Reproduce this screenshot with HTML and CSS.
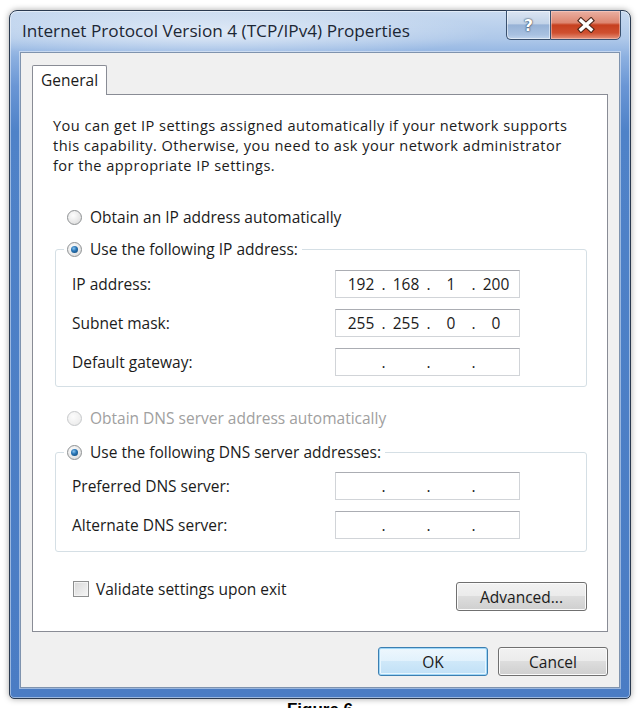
FILE: index.html
```html
<!DOCTYPE html>
<html lang="en">

<head>
    <meta charset="UTF-8">
    <meta name="viewport" content="width=device-width, initial-scale=1.0">
    <title>Internet Protocol Version 4 (TCP/IPv4) Properties</title>
    <link rel="stylesheet" href="styles.css">
</head>

<body>
    <div class="window">
        <div class="titlebar">
            <span class="title">Internet Protocol Version 4 (TCP/IPv4) Properties</span>
            <div class="caption-buttons">
                <button class="cap help" type="button">?</button>
                <button class="cap close" type="button">
                    <svg width="20" height="16" viewBox="0 0 20 16">
                        <path d="M5 3.5 L15 12.5 M15 3.5 L5 12.5" stroke="#4a2418" stroke-width="5.6" stroke-linecap="square" fill="none"/>
                        <path d="M5 3.5 L15 12.5 M15 3.5 L5 12.5" stroke="#ffffff" stroke-width="3.4" stroke-linecap="square" fill="none"/>
                    </svg>
                </button>
            </div>
        </div>
        <div class="client">
            <div class="tabs">
                <div class="tab">General</div>
            </div>
            <section class="tab-page">
                <p class="intro">You can get IP settings assigned automatically if your network supports<br>this capability. Otherwise, you need to ask your network administrator<br>for the appropriate IP settings.</p>

                <label class="option first"><span class="radio"></span>Obtain an IP address automatically</label>
                <fieldset class="group">
                    <legend class="option"><span class="radio checked"></span>Use the following IP address:</legend>
                    <div class="field-row">
                        <span>IP address:</span>
                        <div class="ip-box"><span class="octet">192</span><span class="dot">.</span><span class="octet">168</span><span class="dot">.</span><span class="octet">1</span><span class="dot">.</span><span class="octet">200</span></div>
                    </div>
                    <div class="field-row">
                        <span>Subnet mask:</span>
                        <div class="ip-box"><span class="octet">255</span><span class="dot">.</span><span class="octet">255</span><span class="dot">.</span><span class="octet">0</span><span class="dot">.</span><span class="octet">0</span></div>
                    </div>
                    <div class="field-row">
                        <span>Default gateway:</span>
                        <div class="ip-box"><span class="octet"></span><span class="dot">.</span><span class="octet"></span><span class="dot">.</span><span class="octet"></span><span class="dot">.</span><span class="octet"></span></div>
                    </div>
                </fieldset>

                <label class="option disabled dns-auto"><span class="radio"></span>Obtain DNS server address automatically</label>
                <fieldset class="group dns">
                    <legend class="option"><span class="radio checked"></span>Use the following DNS server addresses:</legend>
                    <div class="field-row">
                        <span>Preferred DNS server:</span>
                        <div class="ip-box"><span class="octet"></span><span class="dot">.</span><span class="octet"></span><span class="dot">.</span><span class="octet"></span><span class="dot">.</span><span class="octet"></span></div>
                    </div>
                    <div class="field-row">
                        <span>Alternate DNS server:</span>
                        <div class="ip-box"><span class="octet"></span><span class="dot">.</span><span class="octet"></span><span class="dot">.</span><span class="octet"></span><span class="dot">.</span><span class="octet"></span></div>
                    </div>
                </fieldset>

                <div class="bottom-row">
                    <label class="check-label"><span class="checkbox"></span>Validate settings upon exit</label>
                    <button class="btn advanced" type="button">Advanced...</button>
                </div>
            </section>
            <div class="dialog-buttons">
                <button class="btn default" type="button">OK</button>
                <button class="btn" type="button">Cancel</button>
            </div>
        </div>
    </div>
    <p class="caption">Figure 6</p>
</body>

</html>
```

FILE: styles.css
```css
body {
    margin: 0;
    background: #fff;
    font-family: "Open Sans", "Noto Sans", sans-serif;
    font-size: 15.5px;
    line-height: 20px;
    color: #1b1b1b;
}
.window {
    width: 622px;
    box-sizing: border-box;
    margin: 10px 0 0 9px;
    border: 1px solid #2a3a50;
    border-radius: 8px 8px 5px 5px;
    background: linear-gradient(180deg, #c8daf0 0, #aec8e9 28px, #8cb0e0 46px, #6a96d5 75px, #4f82c8 120px, #4a7cc4 100%);
    box-shadow: 0 0 6px rgba(0, 0, 0, 0.35), inset 0 0 0 1px rgba(255, 255, 255, 0.45);
}
.titlebar {
    height: 41px;
    display: flex;
    align-items: flex-start;
    padding-left: 12px;
    border-radius: 7px 7px 0 0;
    background: radial-gradient(ellipse 280px 26px at 200px 22px, rgba(255, 255, 255, 0.6), rgba(255, 255, 255, 0));
}
.title {
    flex: 1;
    padding-top: 10px;
    font-size: 17.2px;
    color: #1c2735;
    white-space: nowrap;
}
.caption-buttons {
    display: flex;
    margin: -1px 9px 0 0;
}
.cap {
    height: 30px;
    padding: 0;
    border: 1px solid #39506e;
    font-family: "DejaVu Sans", sans-serif;
    cursor: default;
}
.help {
    width: 44px;
    border-right: none;
    border-radius: 0 0 0 5px;
    background: linear-gradient(180deg, #dbe5f2 0, #c2d3e8 45%, #97b2d6 50%, #a8c1e1 85%, #bfd4ed 100%);
    box-shadow: inset 0 0 0 1px rgba(255, 255, 255, 0.5);
    color: #fff;
    font-size: 16px;
    font-weight: bold;
    text-shadow: 0 0 2px #233750, 0 0 1px #233750;
}
.close {
    width: 71px;
    border-radius: 0 0 5px 0;
    background: linear-gradient(180deg, #eab0a2 0, #dd8670 42%, #c6401f 50%, #cf4f2f 78%, #e5927b 100%);
    box-shadow: inset 0 0 0 1px rgba(255, 220, 210, 0.45);
    display: flex;
    align-items: center;
    justify-content: center;
}
.client {
    margin: 0 10px 10px 10px;
    padding: 12px 11px 11px 11px;
    background: #f0f0f0;
    border: 1px solid #7f93ae;
    box-shadow: 0 0 0 1px rgba(255, 255, 255, 0.45);
}
.tabs {
    display: flex;
    position: relative;
    z-index: 1;
    margin-bottom: -1px;
}
.tab {
    height: 30px;
    box-sizing: border-box;
    padding: 4px 8px 0 8px;
    border: 1px solid #898c95;
    border-bottom: none;
    border-radius: 2px 2px 0 0;
    background: #fff;
}
.tab-page {
    background: #fff;
    border: 1px solid #898c95;
    padding: 20px 20px 20px 20px;
}
.intro {
    margin: 0;
    font-size: 14.6px;
    letter-spacing: 0.45px;
    line-height: 20px;
}
.option {
    display: flex;
    align-items: center;
    height: 20px;
    margin: 0 0 0 14px;
}
.option.first {
    margin-top: 32px;
}
.option.disabled {
    color: #a0a0a0;
}
.dns-auto {
    margin-top: 21px;
}
.radio {
    width: 13px;
    height: 13px;
    margin-right: 8px;
    border: 1px solid #8e9193;
    border-radius: 50%;
    background: radial-gradient(circle at 40% 35%, #fdfdfd 0, #e9e9e9 55%, #d2d2d2 100%);
    display: flex;
    align-items: center;
    justify-content: center;
}
.radio.checked::after {
    content: "";
    width: 7px;
    height: 7px;
    border-radius: 50%;
    background: radial-gradient(circle at 40% 35%, #8cc6f0 0, #2a77b8 40%, #0c3f6b 100%);
}
.disabled .radio {
    border-color: #c6c8ca;
    background: radial-gradient(circle at 40% 35%, #fcfcfc 0, #f0f0f0 60%, #e4e4e4 100%);
}
.group {
    margin: 12px 0 0 2px;
    padding: 11px 66px 10px 16px;
    border: 1px solid #d5dfe5;
    border-radius: 3px;
}
.group legend {
    margin: 0 0 0 -8px;
    padding: 0 4px 0 3px;
}
.group.dns {
    margin-top: 14px;
    padding-top: 10px;
    padding-bottom: 12px;
}
.field-row {
    display: grid;
    grid-template-columns: 263px 185px;
    align-items: center;
    margin-bottom: 11px;
}
.field-row:last-child {
    margin-bottom: 0;
}
.ip-box {
    height: 28px;
    box-sizing: border-box;
    padding-left: 7px;
    display: flex;
    align-items: center;
    border: 1px solid #d1d4d8;
    border-top-color: #abadb3;
    background: #fff;
}
.octet {
    width: 36px;
    text-align: center;
}
.dot {
    width: 9px;
    text-align: center;
}
.bottom-row {
    display: flex;
    justify-content: space-between;
    align-items: flex-start;
    margin-top: 30px;
}
.check-label {
    display: flex;
    align-items: center;
    height: 20px;
    margin: -3px 0 0 20px;
}
.checkbox {
    width: 14px;
    height: 14px;
    margin-right: 7px;
    border: 1px solid #8e8f8f;
    background: linear-gradient(135deg, #d8d8d8 0, #f6f6f6 100%);
    box-shadow: inset 0 0 0 1px #f4f4f4;
}
.btn {
    height: 29px;
    padding: 0;
    border: 1px solid #707070;
    border-radius: 3px;
    background: linear-gradient(180deg, #f2f2f2 0, #ebebeb 49%, #dddddd 50%, #cfcfcf 100%);
    box-shadow: inset 0 0 0 1px #fbfbfb;
    font-family: inherit;
    font-size: 15.5px;
    color: #1b1b1b;
}
.advanced {
    width: 131px;
}
.dialog-buttons {
    display: flex;
    justify-content: flex-end;
    gap: 10px;
    margin-top: 15px;
}
.dialog-buttons .btn {
    width: 110px;
}
.btn.default {
    border-color: #3c7fb1;
    background: linear-gradient(180deg, #eef7fd 0, #e1f1fc 49%, #cfe8f9 50%, #c0e0f6 100%);
    box-shadow: inset 0 0 0 1px #9fd6f7, inset 0 0 0 2px #e8f6fe;
}
.caption {
    margin: 1px 0 0 0;
    text-align: center;
    font-family: "Liberation Sans", Arial, sans-serif;
    font-weight: bold;
    font-size: 17px;
    line-height: 20px;
    color: #000;
}
```
